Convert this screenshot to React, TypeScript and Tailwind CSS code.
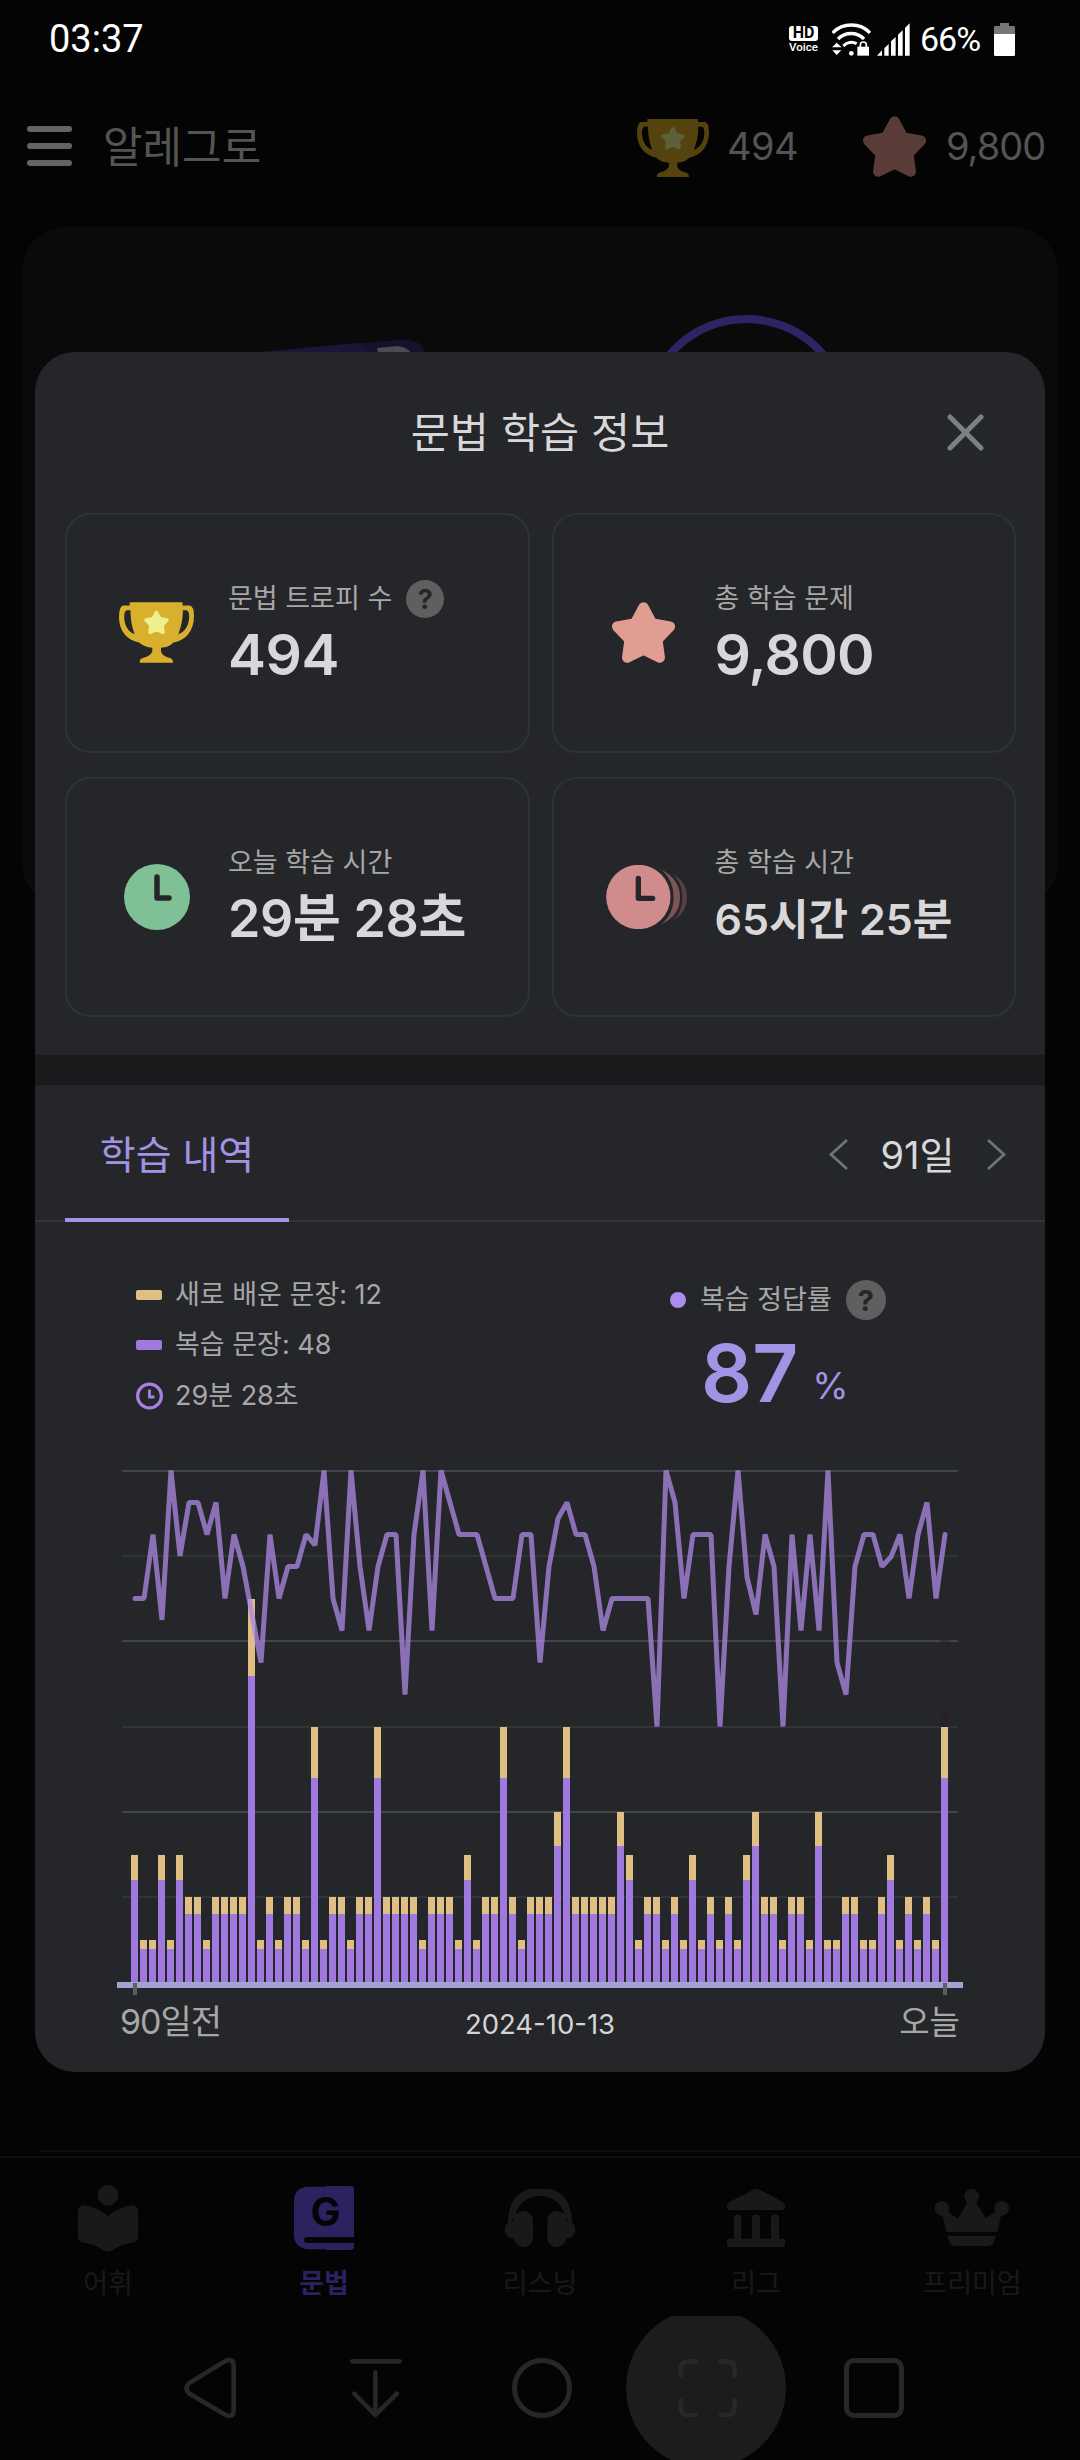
import React from "react";

type IconProps = { className?: string };

const BAR_TOTALS = [
  30, 10, 10, 30, 10, 30, 20, 20, 10, 20, 20, 20, 20, 90, 10, 20, 10, 20, 20, 10, 60, 10, 20, 20, 10, 20, 20, 60, 20, 20,
  20, 20, 10, 20, 20, 20, 10, 30, 10, 20, 20, 60, 20, 10, 20, 20, 20, 40, 60, 20, 20, 20, 20, 20, 40, 30, 10, 20, 20, 10,
  20, 10, 30, 10, 20, 10, 20, 10, 30, 40, 20, 20, 10, 20, 20, 10, 40, 10, 10, 20, 20, 10, 10, 20, 30, 10, 20, 10, 20, 10, 60,
];

// Distance below 100 % in steps of 6.25 points.
const ACCURACY_DROPS = [
  4, 4, 2, 4.67, 0, 2.67, 1, 1, 2, 1, 4, 2, 3, 4.5, 6, 2, 4, 3, 3, 2, 2.33, 0, 4, 5, 0, 3, 5, 3, 2, 2, 7, 2, 0, 5, 0, 1,
  2, 2, 2, 3, 4, 4, 4, 2, 2, 6, 3, 1.5, 1, 2, 2, 3, 5, 4, 4, 4, 4, 4, 8, 0, 1, 4, 2, 2, 2, 8, 3, 0, 3.33, 4.5, 2, 3, 8,
  2, 5, 2, 5, 0, 6, 7, 3, 2, 2, 3, 2.7, 2, 4, 2, 1, 4, 2,
];

function starPoints(outer: number, inner: number) {
  return Array.from({ length: 10 }, (_, i) => {
    const r = i % 2 === 0 ? outer : inner;
    const a = (Math.PI / 5) * i - Math.PI / 2;
    return `${(r * Math.cos(a)).toFixed(2)},${(r * Math.sin(a)).toFixed(2)}`;
  }).join(" ");
}

function Star({ className }: IconProps) {
  return (
    <svg className={className} viewBox="-91 -95 182 175" fill="currentColor" stroke="currentColor">
      <polygon points={starPoints(80, 42)} strokeWidth="30" strokeLinejoin="round" />
    </svg>
  );
}

function Trophy({ className, star }: IconProps & { star: string }) {
  return (
    <svg className={className} viewBox="0 0 216 174">
      <path
        fill="currentColor"
        fillRule="evenodd"
        d="M31 0H183V9H204Q216 11 216 40C216 84 190 110 157 116C145 127 136 130 121 131V140C123 152 135 158 149 161Q156 164 156 174H60V168Q60 163 67 161C83 156 94 150 96 140V131C80 130 70 126 58 116C22 108 0 82 0 42Q0 12 12 9H31ZM33 23H22Q14 26 15 46C17 70 28 86 45 92C37 70 33 50 33 23ZM184 23H195Q203 26 202 46C200 70 188 86 171 92C179 70 184 50 184 23Z"
      />
      <g transform="translate(108 61) scale(.395)" fill={star} stroke={star}>
        <polygon points={starPoints(80, 42)} strokeWidth="26" strokeLinejoin="round" />
      </g>
    </svg>
  );
}

function Help({ className }: IconProps) {
  return (
    <span
      className={`flex items-center justify-center rounded-full bg-[#5f5f5f] font-bold leading-none text-[#242629] ${className}`}
    >
      ?
    </span>
  );
}

function StatusBar() {
  return (
    <div className="flex h-[78px] items-center justify-between pl-[49px] pr-[65px] font-[Roboto] text-white">
      <span className="text-[38px] leading-none">03:37</span>
      <div className="flex items-center">
        <div className="flex w-[29px] flex-col items-center">
          <span className="flex h-[15px] w-[29px] items-center justify-center rounded-[3px] bg-white text-[16px] font-bold leading-none text-black">
            HD
          </span>
          <span className="mt-[1px] text-[11.5px] font-medium leading-[11px]">Voice</span>
        </div>
        <svg className="ml-[14px] h-[33px] w-[39px]" viewBox="637 63 117 99" fill="none" stroke="#fff">
          <path d="M639 93C668 61 722 61 751 93" strokeWidth="10" />
          <path d="M655 111C678 89 711 89 733 111" strokeWidth="10" />
          <path d="M671 132C682 120 698 118 711 125" strokeWidth="9" />
          <g fill="#fff" stroke="none">
            <circle cx="695" cy="154" r="7" />
            <path d="M651 122L666 136H637ZM638 145H665L651 159Z" />
            <path d="M713 134H748V161H713Z" />
          </g>
          <path d="M722 136V129Q722 120 731 120T740 129V136" strokeWidth="5" />
        </svg>
        <svg className="ml-[6px] h-[33px] w-[33px]" viewBox="771 63 99 99" fill="#fff">
          <path d="M771 161L786 145V161ZM793 161V139L806 126V161ZM813 161V118L827 105V161ZM834 161V98L848 85V161ZM855 161V78L869 64V161Z" />
        </svg>
        <span className="ml-[10px] w-[64px] text-[34px] leading-none tracking-[-1px]">66%</span>
        <svg className="ml-[10px] h-[33px] w-[21px]" viewBox="0 0 63 99">
          <path fill="#777" d="M18 0H45V9H59Q63 9 63 13V34H0V13Q0 9 4 9H18Z" />
          <path fill="#fff" d="M0 33H63V95Q63 99 59 99H4Q0 99 0 95Z" />
        </svg>
      </div>
    </div>
  );
}

function AppHeader() {
  return (
    <header className="flex h-[138px] items-center pb-[2px] pl-[27px] pr-[36px] text-[#545454]">
      <div className="flex w-[45px] flex-col gap-[11px]">
        <i className="h-[6px] rounded-full bg-[#646464]" />
        <i className="h-[6px] rounded-full bg-[#646464]" />
        <i className="h-[6px] rounded-full bg-[#646464]" />
      </div>
      <span className="ml-[31px] pt-[3px] text-[43px] leading-none">알레그로</span>
      <div className="ml-auto flex items-center">
        <Trophy className="mt-[4px] h-[58px] w-[72px] text-[#54430f]" star="#5e6039" />
        <span className="ml-[18px] w-[71px] text-[38px] leading-none tracking-[-0.5px]">494</span>
        <Star className="ml-[65px] h-[61px] w-[63px] text-[#593b38]" />
        <span className="ml-[20px] w-[98px] whitespace-nowrap text-[38px] leading-none tracking-[-1px]">9,800</span>
      </div>
    </header>
  );
}

function BackgroundCard() {
  return (
    <section className="mx-[22px] mt-[11px] h-[680px] rounded-[44px] bg-[#0b090a]">
      <svg className="h-[160px] w-full" viewBox="22 227 1036 160">
        <path d="M235 354L398 340Q420 337 427 355V387H235Z" fill="#17112c" />
        <path d="M235 355L356 343L376 357V387H235Z" fill="#1d1538" />
        <path d="M377 348L398 346Q407 347 412 354V387H384Z" fill="#4c4b50" />
        <circle cx="746.5" cy="419.500" r="100.500" fill="none" stroke="#2e2463" strokeWidth="8" />
      </svg>
    </section>
  );
}

function ReaderIcon() {
  return (
    <svg className="h-[67px] w-[60px]" viewBox="114 43 180 201" fill="#191919">
      <circle cx="204" cy="74" r="31" />
      <path d="M204 137C184 119 160 108 134 104Q114 103 114 122V198Q114 214 132 216C158 220 178 229 190 239Q204 247 217 239C230 229 250 220 276 216Q294 214 294 198V122Q294 103 274 104C248 108 224 119 204 137Z" />
    </svg>
  );
}

function GrammarIcon() {
  return (
    <div className="grid h-[64px] w-[60px]">
      <svg className="col-start-1 row-start-1 h-[64px] w-[60px]" viewBox="762 48 180 192" fill="#2c2260">
        <path d="M804 50H858V48H932Q942 49 942 58V201H801Q792 202 792 210T801 219H942V231Q942 239 932 240H858V238H804Q762 232 762 194V92Q764 52 804 50Z" />
      </svg>
      <span className="z-10 col-start-1 row-start-1 pl-[3px] pt-[5px] text-center font-[Inter] text-[40px] font-bold leading-[42px] text-[#030404]">
        G
      </span>
    </div>
  );
}

function HeadphonesIcon() {
  return (
    <svg className="h-[58px] w-[70px]" viewBox="45 51 210 174" fill="#191919">
      <path d="M54 160C50 90 90 51 128 51H172C210 51 250 90 246 160L223 132C218 90 180 71 150 71S82 90 77 132Z" />
      <rect x="72" y="117" width="57" height="108" rx="27" />
      <rect x="172" y="117" width="57" height="108" rx="27" />
      <rect x="45" y="146" width="50" height="53" rx="24" />
      <rect x="205" y="146" width="50" height="53" rx="24" />
    </svg>
  );
}

function BankIcon() {
  return (
    <svg className="h-[58px] w-[58px]" viewBox="711 57 174 174" fill="#191919">
      <path d="M790 59Q798 55 808 59L877 95Q885 99 885 106V114Q885 120 878 120H718Q711 120 711 114V106Q711 99 719 95Z" />
      <path d="M732 206V144Q733 133 743 133T754 144V206H786V144Q787 133 798 133T810 144V206H843V144Q844 133 856 133T867 144V206H880Q885 206 885 211V226Q885 231 880 231H716Q711 231 711 226V211Q711 206 716 206Z" />
    </svg>
  );
}

function CrownIcon() {
  return (
    <svg className="h-[58px] w-[74px]" viewBox="1335 57 222 174" fill="#191919">
      <circle cx="1445" cy="79" r="22" />
      <circle cx="1356" cy="115" r="22" />
      <circle cx="1535" cy="115" r="22" />
      <path d="M1357 132L1372 124L1404 147L1433 95H1457L1487 145L1520 124L1534 132L1522 186H1369Z" />
      <path d="M1371 197H1519L1510 220Q1505 228 1496 228H1394Q1385 228 1380 220Z" />
    </svg>
  );
}

const TABS = [
  { label: "어휘", icon: <ReaderIcon />, active: false },
  { label: "문법", icon: <GrammarIcon />, active: true },
  { label: "리스닝", icon: <HeadphonesIcon />, active: false },
  { label: "리그", icon: <BankIcon />, active: false },
  { label: "프리미엄", icon: <CrownIcon />, active: false },
];

function BottomTabs() {
  return (
    <div className="mt-auto">
      <div className="mx-[41px] h-[2px] bg-[#0d0f0f]" />
      <nav className="mt-[4px] grid h-[160px] grid-cols-5 border-t-2 border-[#0b1010] pt-[23px]">
        {TABS.map((t) => (
          <div key={t.label} className="flex flex-col items-center">
            <div className="flex h-[74px] items-center justify-center">{t.icon}</div>
            <span
              className={
                t.active
                  ? "mt-[13px] text-[27px] font-bold leading-[32px] text-[#2c2260]"
                  : "mt-[13px] text-[27px] leading-[32px] text-[#1a1919]"
              }
            >
              {t.label}
            </span>
          </div>
        ))}
      </nav>
    </div>
  );
}

function SystemNav() {
  return (
    <div className="flex h-[144px] items-center overflow-hidden pl-[184px]">
      <svg className="h-[60px] w-[52px]" viewBox="431 564 157 180" fill="none" stroke="#272727" strokeWidth="14">
        <path d="M553 574Q581 560 581 588V721Q581 747 554 734L446 670Q431 655 446 640Z" />
      </svg>
      <svg
        className="ml-[114px] h-[60px] w-[52px]"
        viewBox="929 564 158 180"
        fill="none"
        stroke="#272727"
        strokeWidth="14"
        strokeLinecap="round"
        strokeLinejoin="round"
      >
        <path d="M936 573H1080M1006 606V736M942 671L1006 736L1071 671" />
      </svg>
      <i className="ml-[110px] h-[60px] w-[60px] rounded-full border-[5px] border-[#272727]" />
      <div className="ml-[54px] flex h-[160px] w-[160px] shrink-0 items-center justify-center rounded-full bg-[#1c1c1c]">
        <svg className="ml-[4px] h-[60px] w-[60px]" viewBox="565 564 180 180" fill="none" stroke="#272727" strokeWidth="14">
          <path d="M573 622V598Q573 574 597 574H624M687 574H711Q735 574 735 598V622M735 686V710Q735 735 711 735H687M624 735H597Q573 735 573 710V686" />
        </svg>
      </div>
      <i className="ml-[58px] h-[60px] w-[60px] rounded-[10px] border-[5px] border-[#272727]" />
    </div>
  );
}

function StatCard({ icon, label, children }: { icon: React.ReactNode; label: React.ReactNode; children: React.ReactNode }) {
  return (
    <div className="flex h-[240px] items-center rounded-[25px] border-2 border-[#303336]">
      <div className="flex w-[161px] items-center justify-center pb-[1px] pl-[18px]">{icon}</div>
      <div className="flex flex-col pt-[2px]">
        <div className="flex h-[38px] items-center text-[27px] leading-[38px] text-[#a8a7a8]">{label}</div>
        <div className="mt-[4px] h-[66px] whitespace-nowrap font-semibold leading-[66px]">{children}</div>
      </div>
    </div>
  );
}

function SolidClock({ className }: IconProps) {
  return (
    <svg className={className} viewBox="0 0 66 66">
      <circle cx="33" cy="33" r="33" fill="currentColor" />
      <path d="M33 13V34H45" fill="none" stroke="#242629" strokeWidth="5.500" strokeLinecap="round" strokeLinejoin="round" />
    </svg>
  );
}

function StackedClock() {
  return (
    <svg className="ml-[7px] h-[64px] w-[81px]" viewBox="0 0 243 192">
      <circle cx="97" cy="96" r="96.500" fill="#d08c8c" />
      <path d="M167 14Q222 42 222 97T167 177Q203 148 203 97T167 14Z" fill="#7c5558" />
      <path d="M200 27Q243 50 243 97T200 166Q229 143 229 97T200 27Z" fill="#554044" />
      <path d="M97 40V100H140" fill="none" stroke="#242629" strokeWidth="16" strokeLinecap="round" strokeLinejoin="round" />
    </svg>
  );
}

function HistoryChart() {
  const base = 1982;
  const unit = 512 / 120;
  const points = ACCURACY_DROPS.map((d, i) => `${135 + i * 9},${(1470.5 + d * 32).toFixed(1)}`).join(" ");
  return (
    <svg className="h-[540px] w-[850px]" viewBox="115 1460 850 540">
      <defs>
        <linearGradient id="today" x1="0" y1="0" x2="0" y2="1">
          <stop offset="0" stopColor="#26242b" stopOpacity="0" />
          <stop offset="1" stopColor="#26222b" />
        </linearGradient>
      </defs>
      <g shapeRendering="crispEdges">
        {[0, 1, 2, 3, 4, 5].map((i) => (
          <rect
            key={i}
            x="122"
            y={Math.round(1469.7 + i * 85.35)}
            width="836"
            height="2"
            fill={i % 2 === 0 ? "#414549" : "#2f3537"}
          />
        ))}
        <rect x="940" y="1540" width="9" height="187" fill="url(#today)" />
        {BAR_TOTALS.map((total, i) => {
          const top = Math.round(base + 0.7 - total * unit);
          const split = Math.round(base + 0.7 - total * 0.8 * unit);
          return (
            <g key={i}>
              <rect x={131 + i * 9} y={top} width="7" height={split - top} fill="#dfbf83" />
              <rect x={131 + i * 9} y={split} width="7" height={base - split} fill="#a079df" />
            </g>
          );
        })}
        <rect x="117" y={base} width="846" height="6" fill="#a2a2d3" />
        <rect x="133" y="1983" width="4" height="12" fill="#5d5d60" />
        <rect x="943" y="1983" width="4" height="12" fill="#5d5d60" />
      </g>
      <polyline
        points={points}
        fill="none"
        stroke="#ac88e4"
        strokeOpacity="0.76"
        strokeWidth="5"
        strokeLinecap="round"
        strokeLinejoin="bevel"
      />
    </svg>
  );
}

function StudyDialog() {
  return (
    <div className="absolute left-[35px] top-[352px] flex h-[1720px] w-[1010px] flex-col overflow-hidden rounded-[40px] bg-[#242629] text-[#d9d7d9]">
      <div className="grid h-[161px] grid-cols-[1fr_auto_1fr] items-center">
        <h1 className="col-start-2 pt-[1px] text-[42.5px] leading-none">문법 학습 정보</h1>
        <svg
          className="mr-[61px] h-[37px] w-[37px] justify-self-end"
          viewBox="0 0 37 37"
          stroke="#7b8084"
          strokeWidth="5"
          strokeLinecap="round"
        >
          <path d="M3 3L34 34M34 3L3 34" />
        </svg>
      </div>

      <div className="grid grid-cols-2 gap-x-[22px] gap-y-[24px] pl-[30px] pr-[29px]">
        <StatCard
          icon={<Trophy className="h-[61px] w-[75px] text-[#d9b02d]" star="#eff08d" />}
          label={
            <>
              문법 트로피 수<Help className="ml-[14px] h-[38px] w-[38px] text-[27px]" />
            </>
          }
        >
          <span className="text-[57px] tracking-[-0.5px]">494</span>
        </StatCard>
        <StatCard icon={<Star className="h-[61px] w-[63px] text-[#e29d92]" />} label="총 학습 문제">
          <span className="text-[57px] tracking-[-0.8px]">9,800</span>
        </StatCard>
        <StatCard icon={<SolidClock className="h-[66px] w-[66px] text-[#7fc097]" />} label="오늘 학습 시간">
          <span className="text-[52px] tracking-[-0.3px]">29분 28초</span>
        </StatCard>
        <StatCard icon={<StackedClock />} label="총 학습 시간">
          <span className="text-[43px]">65시간 25분</span>
        </StatCard>
      </div>

      <div className="mt-[38px] h-[30px] shrink-0 bg-[#1a1a1c]" />

      <div className="flex h-[137px] shrink-0 items-stretch justify-between border-b-2 border-[#333539] pl-[30px] pr-[39px]">
        <div className="-mb-[2px] flex w-[224px] items-center justify-center border-b-4 border-[#a293e4] pt-[6px] text-[39px] leading-none text-[#a293e4]">
          학습 내역
        </div>
        <div className="flex items-center pt-[4px] text-[38px] leading-none">
          <svg className="h-[31px] w-[19px]" viewBox="0 0 19 31" fill="none" stroke="#6c757b" strokeWidth="2.800">
            <path d="M18 1L2 15.500L18 30" />
          </svg>
          <span className="w-[139px] text-center">91일</span>
          <svg className="h-[31px] w-[19px]" viewBox="0 0 19 31" fill="none" stroke="#6c757b" strokeWidth="2.800">
            <path d="M1 1L17 15.500L1 30" />
          </svg>
        </div>
      </div>

      <div className="flex h-[238px] shrink-0 pl-[101px] pt-[48px] text-[27px] text-[#a8a7a8]">
        <ul className="w-[534px]">
          <li className="flex h-[50px] items-center gap-[13px]">
            <i className="h-[10px] w-[26px] rounded-[2px] bg-[#dfbf83]" />
            새로 배운 문장: 12
          </li>
          <li className="flex h-[50px] items-center gap-[13px]">
            <i className="h-[10px] w-[26px] rounded-[2px] bg-[#a079df]" />
            복습 문장: 48
          </li>
          <li className="flex h-[52px] items-center gap-[12px]">
            <svg className="h-[28px] w-[27px]" viewBox="0 0 27 28" fill="none" stroke="#a880e0" strokeWidth="3.200">
              <circle cx="13.500" cy="14" r="11.900" />
              <path d="M13.500 7.500V15H18.500" strokeWidth="2.800" />
            </svg>
            29분 28초
          </li>
        </ul>
        <div>
          <div className="flex h-[58px] items-center pt-[2px]">
            <i className="mr-[14px] h-[16px] w-[16px] rounded-full bg-[#ac8cec]" />
            복습 정답률
            <Help className="ml-[14px] h-[40px] w-[40px] text-[29px]" />
          </div>
          <div className="flex items-end pl-[31px] leading-none text-[#a293e4]">
            <b className="text-[80px] font-semibold leading-[90px]">87</b>
            <span className="ml-[14px] pb-[14px] text-[37px] leading-none">%</span>
          </div>
        </div>
      </div>

      <div className="flex flex-col pl-[80px]">
        <HistoryChart />
        <div className="flex h-[44px] w-[846px] items-center justify-between pl-[5px] pr-[1px] text-[34px] leading-[44px] text-[#a8a7a8]">
          <span className="w-[120px] tracking-[-1px]">90일전</span>
          <span className="pt-[4px] text-[27.5px] leading-[40px] text-[#d4d4d4]">2024-10-13</span>
          <span className="w-[120px] text-right text-[33px]">오늘</span>
        </div>
      </div>
    </div>
  );
}

export default function App() {
  return (
    <main className="relative flex h-[2460px] w-[1080px] flex-col overflow-hidden bg-[#040404] font-[Inter,'Noto_Sans_CJK_KR',sans-serif]">
      <StatusBar />
      <AppHeader />
      <BackgroundCard />
      <BottomTabs />
      <SystemNav />
      <StudyDialog />
    </main>
  );
}
